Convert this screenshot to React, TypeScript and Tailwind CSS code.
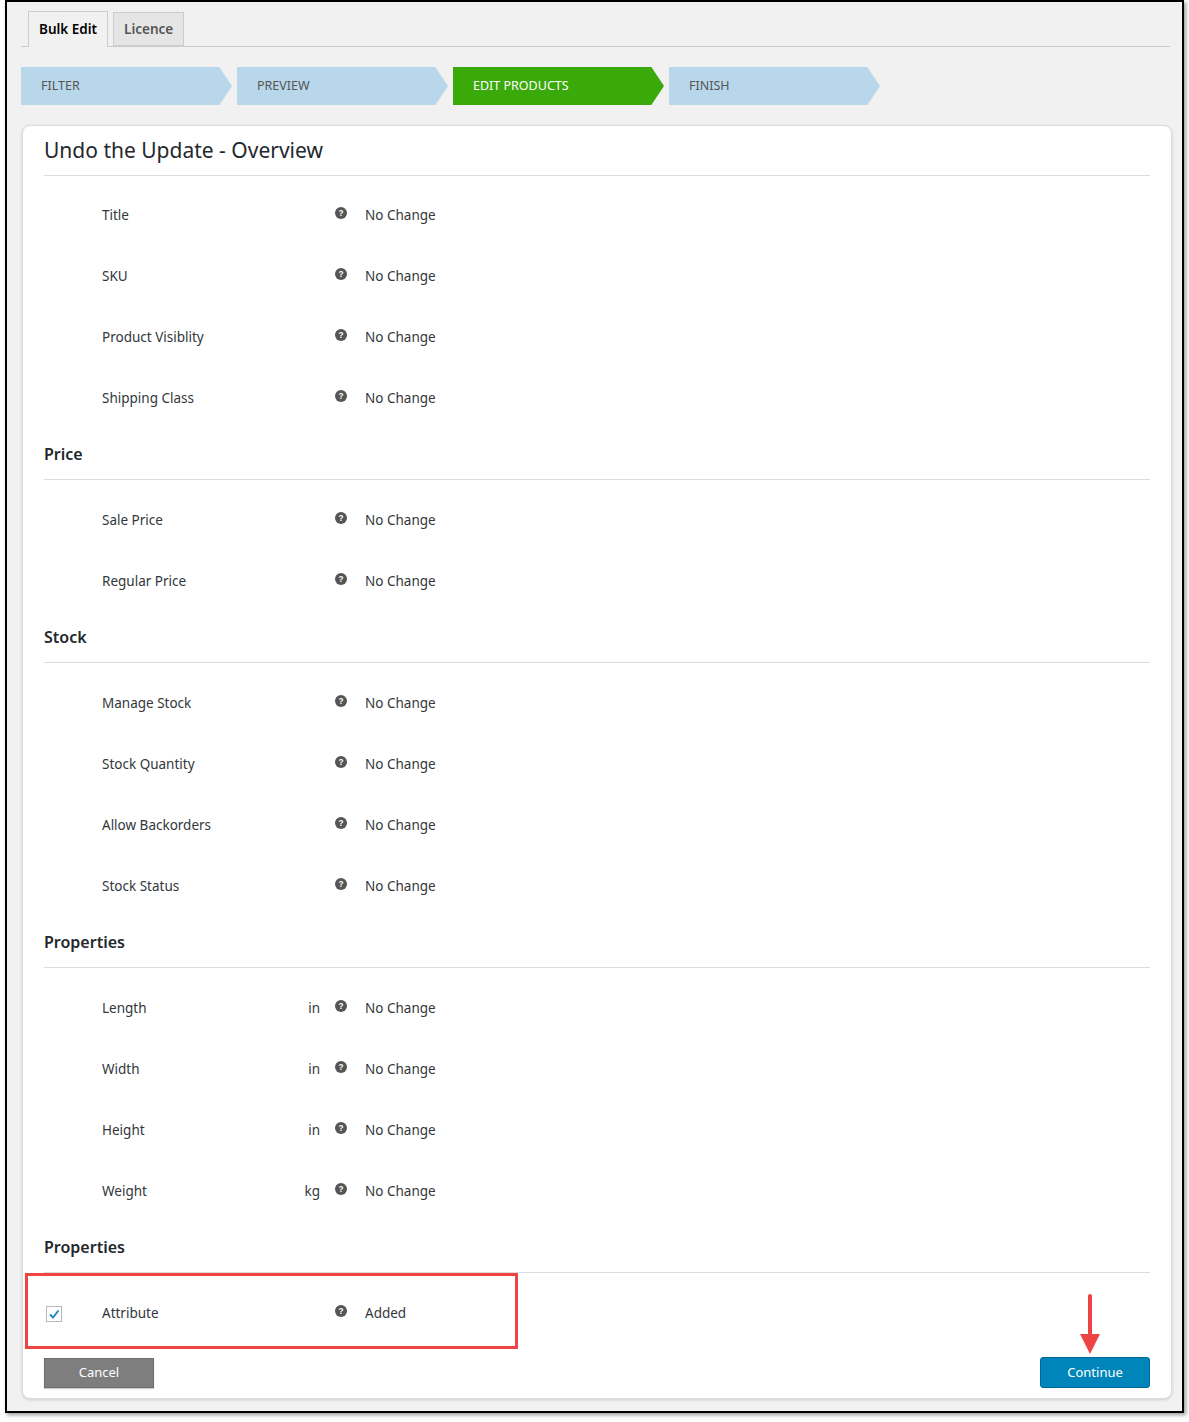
import React from 'react'

const HelpIcon = () => (
    <svg width="12" height="12" viewBox="0 0 16 16" className="shrink-0">
        <circle cx="8" cy="8" r="8" fill="#555" />
        <text x="8" y="12.2" textAnchor="middle" fontSize="11" fontWeight="700" fill="#fff" fontFamily="Liberation Sans, sans-serif">?</text>
    </svg>
)

type RowProps = { label: string; unit?: string; value?: string; check?: boolean }

function Row({ label, unit, value = 'No Change', check }: RowProps) {
    return (
        <div className="flex h-[61px] items-center text-[13.5px] text-[#32373c]">
            <div className="w-[58px] pl-[2px]">
                {check && (
                    <span className="flex h-4 w-4 items-center justify-center border border-[#b4b9be] bg-white">
                        <svg width="12" height="12" viewBox="0 0 12 12">
                            <path d="M2 6.5 L5 9.5 L10.5 2.5" stroke="#1e8cbe" strokeWidth="2" fill="none" />
                        </svg>
                    </span>
                )}
            </div>
            <div className="w-[196px]">{label}</div>
            <div className="w-[22px] text-right">{unit}</div>
            <div className="flex w-[42px] justify-center pb-[6px]">
                <HelpIcon />
            </div>
            <div className="pl-[3px]">{value}</div>
        </div>
    )
}

function Header({ title }: { title: string }) {
    return (
        <div className="mb-[10px] flex h-[51px] items-end border-b border-[#dcdcde] pb-[13px] text-[16px] font-semibold text-[#23282d]">
            {title}
        </div>
    )
}

const steps = ['FILTER', 'PREVIEW', 'EDIT PRODUCTS', 'FINISH']

export default function App() {
    return (
        <div className="h-[1422px] w-[1189px] bg-white font-['Open_Sans',sans-serif]">
            <div className="ml-[5px] h-[1413px] w-[1179px] border-2 border-black bg-[#f1f1f1] shadow-[2px_2px_4px_rgba(0,0,0,0.4)]">
                <div className="ml-[14px] mr-[12px] flex items-end gap-[5px] border-b border-[#ccc] pl-[7px] pt-[9px]">
                    <div className="-mb-px flex h-[36px] items-center border border-b-0 border-[#ccc] bg-[#f1f1f1] px-[10px] text-[13.5px] font-semibold text-black">
                        Bulk Edit
                    </div>
                    <div className="flex h-[34px] items-center border border-[#ccc] bg-[#e5e5e5] px-[10px] text-[13.5px] font-semibold text-[#555]">
                        Licence
                    </div>
                </div>
                <div className="mt-[20px] flex gap-[5px] pl-[14px]">
                    {steps.map((s, i) => (
                        <div
                            key={s}
                            className={`flex h-[38px] w-[211px] items-center pl-[20px] text-[12.5px] [clip-path:polygon(0_0,94%_0,100%_50%,94%_100%,0_100%)] ${
                                i === 2 ? 'bg-[#3aa90a] text-white' : 'bg-[#b8d7ea] text-[#555]'
                            }`}>
                            {s}
                        </div>
                    ))}
                </div>
                <div className="ml-[15px] mr-[10px] mt-[20px] rounded-[8px] border border-[#dcdcdc] bg-white px-[21px] pb-[10px] shadow-[0_1px_3px_rgba(0,0,0,0.15)]">
                    <div className="flex h-[50px] items-end border-b border-[#dcdcde] pb-[9px] text-[21px] text-[#23282d]">
                        Undo the Update - Overview
                    </div>
                    <div className="h-[9px]" />
                    {['Title', 'SKU', 'Product Visiblity', 'Shipping Class'].map((l) => (
                        <Row key={l} label={l} />
                    ))}
                    <Header title="Price" />
                    {['Sale Price', 'Regular Price'].map((l) => (
                        <Row key={l} label={l} />
                    ))}
                    <Header title="Stock" />
                    {['Manage Stock', 'Stock Quantity', 'Allow Backorders', 'Stock Status'].map((l) => (
                        <Row key={l} label={l} />
                    ))}
                    <Header title="Properties" />
                    {[
                        ['Length', 'in'],
                        ['Width', 'in'],
                        ['Height', 'in'],
                        ['Weight', 'kg'],
                    ].map(([l, u]) => (
                        <Row key={l} label={l} unit={u} />
                    ))}
                    <Header title="Properties" />
                    <div className="relative">
                        <div className="pointer-events-none absolute left-[-19px] top-[-10px] h-[76px] w-[493px] border-[3px] border-[#ef4444]" />
                        <Row label="Attribute" value="Added" check />
                    </div>
                    <div className="mt-[13px] flex items-end justify-between">
                        <button className="h-[30px] w-[110px] border border-[#6d6d6d] bg-[#7e7e7e] text-[13px] text-white shadow-[0_1px_1px_rgba(0,0,0,0.2)]">
                            Cancel
                        </button>
                        <div className="relative">
                            <svg className="absolute bottom-[32px] left-[38px]" width="24" height="62" viewBox="0 0 24 62">
                                <line x1="12" y1="2" x2="12" y2="42" stroke="#ef4444" strokeWidth="4" strokeLinecap="round" />
                                <path d="M2 40 L22 40 L12 60 Z" fill="#ef4444" />
                            </svg>
                            <button className="h-[31px] w-[110px] rounded-[3px] border border-[#006799] bg-[#0085ba] text-[13px] text-white">
                                Continue
                            </button>
                        </div>
                    </div>
                </div>
            </div>
        </div>
    )
}
